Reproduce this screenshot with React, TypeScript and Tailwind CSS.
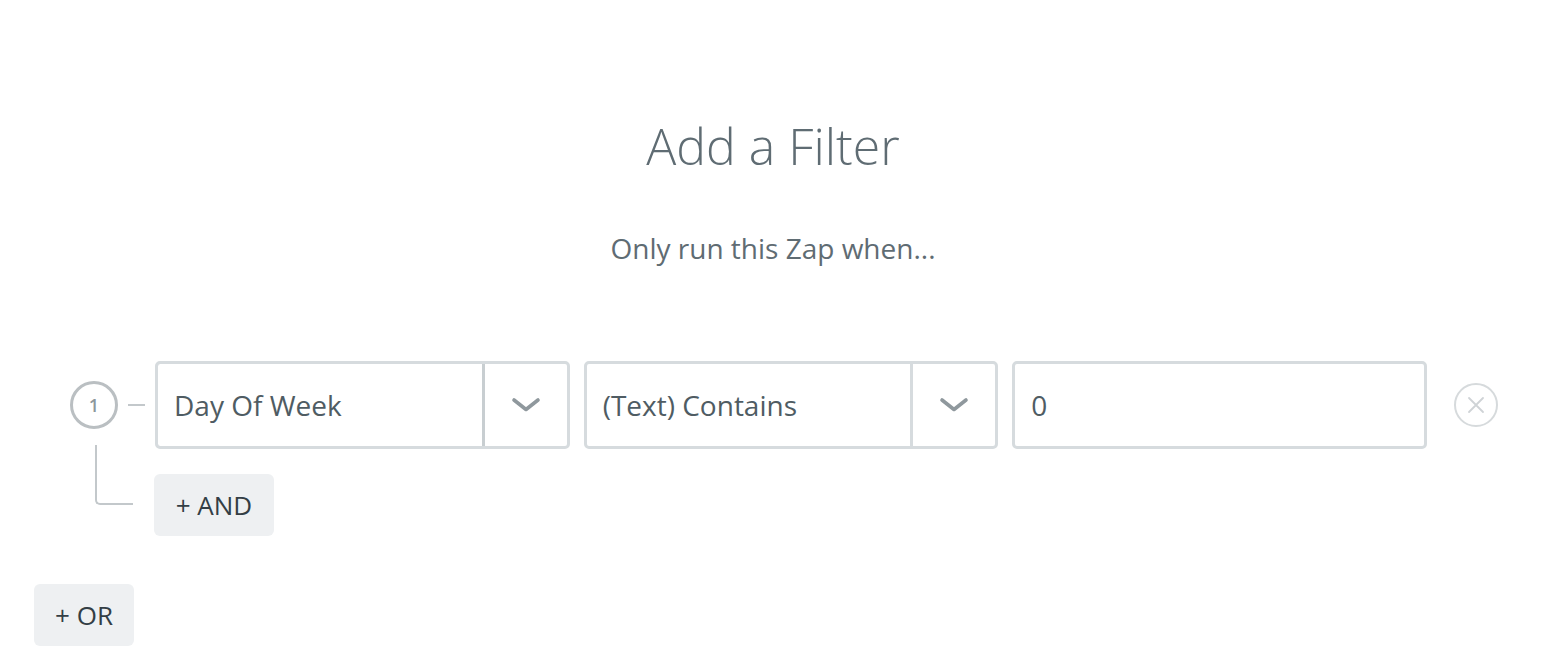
import React from "react";

function Chevron() {
  return (
    <svg width="30" height="16" viewBox="0 0 30 16" fill="none">
      <polyline points="3,3 15,12.5 27,3" stroke="#8f989d" strokeWidth="3.6" strokeLinecap="round" strokeLinejoin="round" />
    </svg>
  );
}

function Select({ label, focused }: { label: string; focused?: boolean }) {
  return (
    <div className="h-[88px] flex rounded-[5px] border-[3px] border-[#d6dbde] bg-white overflow-hidden">
      <div className={`flex-1 flex items-center pl-[16px] text-[28px] text-[#4f5c63] ${focused ? "border-[3px] border-[#c8ced1] -m-[3px] rounded-l-[5px]" : ""}`}>
        {label}
      </div>
      <div className={`w-[85px] flex items-center justify-center border-l-[3px] ${focused ? "border-[#c8ced1]" : "border-[#d6dbde]"}`}>
        <Chevron />
      </div>
    </div>
  );
}

export default function App() {
  return (
    <div className="w-[1550px] h-[660px] bg-white px-[34px] font-['Open_Sans',sans-serif] overflow-hidden">
      <div className="pr-[4px]">
        <div className="pt-[113px] text-center text-[50px] leading-[66px] font-light text-[#5f6c73]">Add a Filter</div>
        <div className="mt-[49px] text-center text-[28px] leading-[40px] text-[#5f6c73]">Only run this Zap when...</div>
      </div>

      <div className="mt-[93px] flex items-center pl-[36px]">
        <div className="w-[48px] h-[48px] rounded-full border-[3px] border-[#babfc2] flex items-center justify-center">
          <span className="text-lg leading-none font-semibold text-[#8d979c]">1</span>
        </div>
        <div className="w-[17px] h-[2px] mx-[10px] bg-[#c3c8cb]" />
        <div className="flex-1 grid grid-cols-3 gap-[14px]">
          <Select label="Day Of Week" focused />
          <Select label="(Text) Contains" />
          <div className="h-[88px] flex items-center rounded-[5px] border-[3px] border-[#d6dbde] pl-[16px] text-[28px] text-[#4f5c63]">
            0
          </div>
        </div>
        <div className="ml-[27px] mr-[18px] w-[44px] h-[44px] rounded-full border-2 border-[#d6dadc] flex items-center justify-center">
          <svg width="18" height="18" viewBox="0 0 18 18" fill="none">
            <path d="M2 2 L16 16 M16 2 L2 16" stroke="#cfd3d6" strokeWidth="1.8" strokeLinecap="round" />
          </svg>
        </div>
      </div>

      <div className="mt-[25px] flex items-start">
        <div className="ml-[61px] -mt-[29px] w-[38px] h-[60px] border-l-2 border-b-2 border-[#c3c8cb] rounded-bl-[5px]" />
        <button className="ml-[21px] w-[120px] h-[62px] rounded-[6px] bg-[#eef0f2] text-[26px] text-[#333e45]">
          + AND
        </button>
      </div>

      <button className="mt-[48px] w-[100px] h-[62px] rounded-[6px] bg-[#eef0f2] text-[26px] text-[#333e45]">
        + OR
      </button>
    </div>
  );
}
